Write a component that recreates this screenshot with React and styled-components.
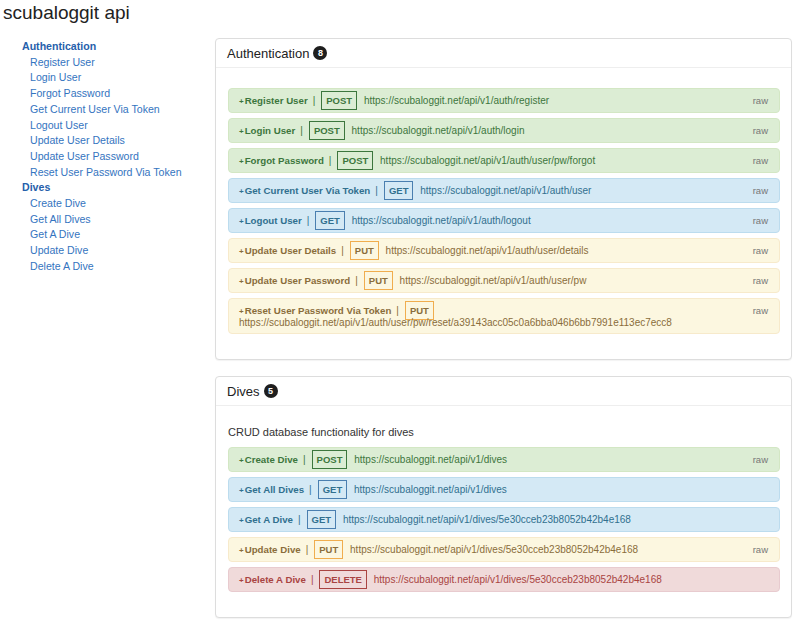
import React from "react";
import styled, { createGlobalStyle } from "styled-components";

const groups = [
  {
    name: "Authentication",
    desc: "",
    items: [
      { name: "Register User", method: "POST", url: "https://scubaloggit.net/api/v1/auth/register", raw: true },
      { name: "Login User", method: "POST", url: "https://scubaloggit.net/api/v1/auth/login", raw: true },
      { name: "Forgot Password", method: "POST", url: "https://scubaloggit.net/api/v1/auth/user/pw/forgot", raw: true },
      { name: "Get Current User Via Token", method: "GET", url: "https://scubaloggit.net/api/v1/auth/user", raw: true },
      { name: "Logout User", method: "GET", url: "https://scubaloggit.net/api/v1/auth/logout", raw: true },
      { name: "Update User Details", method: "PUT", url: "https://scubaloggit.net/api/v1/auth/user/details", raw: true },
      { name: "Update User Password", method: "PUT", url: "https://scubaloggit.net/api/v1/auth/user/pw", raw: true },
      {
        name: "Reset User Password Via Token",
        method: "PUT",
        url: "https://scubaloggit.net/api/v1/auth/user/pw/reset/a39143acc05c0a6bba046b6bb7991e113ec7ecc8",
        raw: true,
      },
    ],
  },
  {
    name: "Dives",
    desc: "CRUD database functionality for dives",
    items: [
      { name: "Create Dive", method: "POST", url: "https://scubaloggit.net/api/v1/dives", raw: true },
      { name: "Get All Dives", method: "GET", url: "https://scubaloggit.net/api/v1/dives", raw: false },
      { name: "Get A Dive", method: "GET", url: "https://scubaloggit.net/api/v1/dives/5e30cceb23b8052b42b4e168", raw: false },
      { name: "Update Dive", method: "PUT", url: "https://scubaloggit.net/api/v1/dives/5e30cceb23b8052b42b4e168", raw: true },
      { name: "Delete A Dive", method: "DELETE", url: "https://scubaloggit.net/api/v1/dives/5e30cceb23b8052b42b4e168", raw: false },
    ],
  },
];

// bootstrap-ish alert palettes per http method
const palette = {
  POST: { bg: "#dcedd4", border: "#d3e7c4", text: "#3c763d", badge: "#3c763d" },
  GET: { bg: "#d4e9f5", border: "#bcdcee", text: "#31708f", badge: "#4a7fb0" },
  PUT: { bg: "#fcf7e0", border: "#f7eacb", text: "#8a6d3b", badge: "#f0ad4e" },
  DELETE: { bg: "#f0dada", border: "#e8cbcf", text: "#a94442", badge: "#a94442" },
};

const GlobalStyle = createGlobalStyle`
  body {
    margin: 0;
    background: #fff;
    color: #333;
    font-family: "Liberation Sans", Arial, Helvetica, sans-serif;
  }
`;

const Endpoint = ({ item }) => (
  <Row $method={item.method}>
    {item.raw && <Raw>raw</Raw>}
    <Name>
      <Plus>+</Plus>
      {item.name}
    </Name>
    <Sep>|</Sep>
    <Method $method={item.method}>{item.method}</Method>{" "}
    <Url>{item.url}</Url>
  </Row>
);

const App = () => {
  return (
    <Page>
      <GlobalStyle />
      <Title>scubaloggit api</Title>
      <Layout>
        <Sidebar>
          {groups.map((g) => (
            <React.Fragment key={g.name}>
              <NavHead href="#">{g.name}</NavHead>
              {g.items.map((item) => (
                <NavItem href="#" key={item.name}>
                  {item.name}
                </NavItem>
              ))}
            </React.Fragment>
          ))}
        </Sidebar>
        <Main>
          {groups.map((g) => (
            <Panel key={g.name}>
              <PanelHeading>
                {g.name}
                <Count>{g.items.length}</Count>
              </PanelHeading>
              <PanelBody>
                {g.desc && <Desc>{g.desc}</Desc>}
                {g.items.map((item) => (
                  <Endpoint item={item} key={item.name} />
                ))}
              </PanelBody>
            </Panel>
          ))}
        </Main>
      </Layout>
    </Page>
  );
};
export default App;

const Page = styled.div`
  width: 800px;
`;

const Title = styled.h1`
  margin: 0 0 14px;
  padding: 2px 0 0 3px;
  font-size: 19px;
  line-height: 22px;
  font-weight: 400;
  color: #222;
`;

const Layout = styled.div`
  display: grid;
  grid-template-columns: 215px 577px;
  align-items: start;
`;

const Sidebar = styled.nav`
  display: flex;
  flex-direction: column;
  align-items: flex-start;
  padding: 1px 0 0 22px;
  font-size: 10.6px;
  line-height: 15.7px;
`;

const NavHead = styled.a`
  color: #2660ab;
  font-weight: 700;
  text-decoration: none;
`;

const NavItem = styled.a`
  padding-left: 8px;
  color: #3474c0;
  text-decoration: none;
`;

const Main = styled.main`
  display: flex;
  flex-direction: column;
`;

const Panel = styled.section`
  margin-bottom: 16px;
  border: 1px solid #ddd;
  border-radius: 4px;
  background: #fff;
  box-shadow: 0 1px 1px rgba(0, 0, 0, 0.05);
`;

const PanelHeading = styled.div`
  display: flex;
  align-items: center;
  height: 28px;
  padding: 0 11px;
  border-bottom: 1px solid #eee;
  font-size: 13px;
  color: #222;
`;

const Count = styled.span`
  display: inline-flex;
  align-items: center;
  justify-content: center;
  width: 14px;
  height: 14px;
  margin-left: 4px;
  border-radius: 50%;
  background: #1e1e1e;
  color: #fff;
  font-size: 9px;
  font-weight: 700;
`;

const PanelBody = styled.div`
  padding: 20px 11px 20px 12px;
`;

const Desc = styled.p`
  margin: 0 0 9px;
  font-size: 11px;
  line-height: 12px;
  color: #333;
`;

const Row = styled.div`
  margin-bottom: 5px;
  padding: 6px 11px 5px 10px;
  border: 1px solid ${(p) => palette[p.$method].border};
  border-radius: 4px;
  background: ${(p) => palette[p.$method].bg};
  color: ${(p) => palette[p.$method].text};
  font-size: 10px;
  line-height: 11px;
`;

const Raw = styled.span`
  float: right;
  color: #777;
  font-size: 9.5px;
`;

const Name = styled.span`
  font-weight: 700;
  font-size: 9.7px;
`;

const Plus = styled.span`
  margin-right: 1px;
  font-size: 8px;
`;

const Sep = styled.span`
  margin: 0 6px 0 5px;
`;

const Method = styled.span`
  margin-right: 4px;
  padding: 3px 4px;
  border: 1px solid ${(p) => palette[p.$method].badge};
  font-size: 9.5px;
  font-weight: 700;
`;

const Url = styled.span``;
